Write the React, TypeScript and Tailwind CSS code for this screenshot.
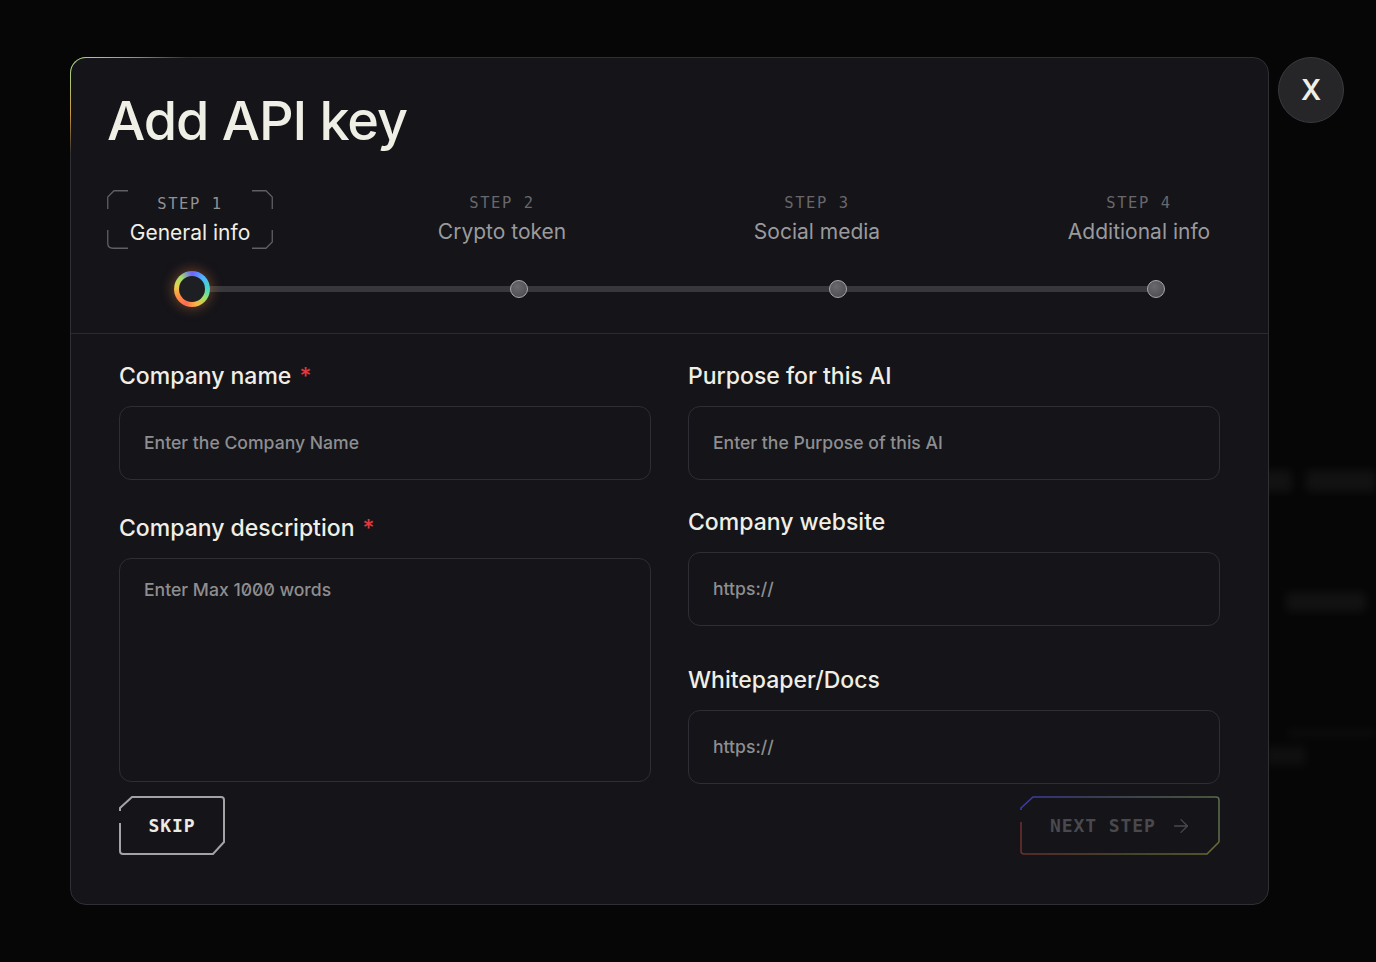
import { ArrowRight } from "lucide-react";

const STEPS = [
  { step: "STEP 1", title: "General info" },
  { step: "STEP 2", title: "Crypto token" },
  { step: "STEP 3", title: "Social media" },
  { step: "STEP 4", title: "Additional info" },
];

const sans = "font-['Inter','Noto_Sans',sans-serif]";
const mono = "font-['DejaVu_Sans_Mono','Liberation_Mono',monospace]";

function StepBrackets() {
  return (
    <svg
      className="pointer-events-none absolute inset-0"
      width="166"
      height="59"
      viewBox="0 0 166 59"
      fill="none"
      stroke="#5f5f64"
      strokeWidth="1.3"
    >
      <path d="M0.75 19 V7 L7 0.75 H21" />
      <path d="M0.75 40 V53 Q0.75 58.25 6 58.25 H21" />
      <path d="M145 0.75 H159 L165.25 7 V19" />
      <path d="M165.25 40 V52 L159 58.25 H145" />
    </svg>
  );
}

function StepLabel({ step, title, active }: { step: string; title: string; active?: boolean }) {
  return (
    <div className="flex flex-col items-center">
      <span
        className={`${mono} text-[15.5px] leading-[22px] tracking-[0.1em] ${
          active ? "text-[#919194]" : "text-[#68686c]"
        }`}
      >
        {step}
      </span>
      <span
        className={`${sans} mt-[5px] whitespace-nowrap text-[21px] leading-[26px] ${
          active ? "text-[#f0efe6]" : "text-[#9a9a9c]"
        }`}
      >
        {title}
      </span>
    </div>
  );
}

function Stepper() {
  return (
    <div>
      <div className="flex items-start">
        <div className="relative flex h-[59px] w-[166px] shrink-0 items-center justify-center">
          <StepBrackets />
          <StepLabel step={STEPS[0].step} title={STEPS[0].title} active />
        </div>
        <div className="ml-[149px] flex w-[160px] shrink-0 justify-center pt-[2px]">
          <StepLabel step={STEPS[1].step} title={STEPS[1].title} />
        </div>
        <div className="ml-[155px] flex w-[160px] shrink-0 justify-center pt-[2px]">
          <StepLabel step={STEPS[2].step} title={STEPS[2].title} />
        </div>
        <div className="ml-[162px] flex w-[160px] shrink-0 justify-center pt-[2px]">
          <StepLabel step={STEPS[3].step} title={STEPS[3].title} />
        </div>
      </div>

      <div className="relative ml-[67px] mt-[22px] flex h-[36px] w-[991px] items-center justify-between">
        <div className="absolute left-[18px] right-[9px] top-1/2 h-[6px] -translate-y-1/2 rounded-full bg-[#38383c]" />
        <div className="relative h-[36px] w-[36px] rounded-full bg-[conic-gradient(from_0deg,#6f62ff,#4fb4ff_12%,#45dcc4_25%,#a9df5e_36%,#ffb240_46%,#ff6b52_56%,#ff9342_68%,#e9cf4f_78%,#9fdf6c_88%,#6f62ff)] p-[5px] shadow-[0_0_14px_rgba(255,140,70,0.45)]">
          <div className="h-full w-full rounded-full bg-[#1e1f22]" />
        </div>
        <div className="relative h-[18px] w-[18px] rounded-full border border-[#a9a9ad] bg-[radial-gradient(circle_at_40%_35%,#6a6a6e,#48484c)]" />
        <div className="relative h-[18px] w-[18px] rounded-full border border-[#a9a9ad] bg-[radial-gradient(circle_at_40%_35%,#6a6a6e,#48484c)]" />
        <div className="relative h-[18px] w-[18px] rounded-full border border-[#a9a9ad] bg-[radial-gradient(circle_at_40%_35%,#6a6a6e,#48484c)]" />
      </div>
    </div>
  );
}

function Label({ text, required }: { text: string; required?: boolean }) {
  return (
    <div className={`${sans} text-[23px] font-medium leading-[32px] text-[#f0efe6]`}>
      {text}
      {required && <span className="ml-[8px] text-[#e0393e]">*</span>}
    </div>
  );
}

function Field({ placeholder, height = "h-[74px]" }: { placeholder: string; height?: string }) {
  return (
    <div
      className={`${height} mt-[14px] rounded-[12px] border border-[#2e2e34] bg-[#141419] px-[24px] ${
        height === "h-[74px]" ? "flex items-center" : "pt-[19px]"
      }`}
    >
      <span className={`${sans} slashed-zero text-[17.6px] font-medium leading-[24px] text-[#8e8e90]`}>
        {placeholder}
      </span>
    </div>
  );
}

function SkipButton() {
  return (
    <button className="relative flex h-[59px] w-[106px] items-center justify-center">
      <svg
        className="pointer-events-none absolute inset-0"
        width="106"
        height="59"
        viewBox="0 0 106 59"
        fill="none"
        stroke="#a3a3a6"
        strokeWidth="2"
      >
        <path d="M1 15 V12 L13 1 H102 Q105 1 105 4 V46 L94 58 H4 Q1 58 1 55 V27" />
      </svg>
      <span className={`${mono} text-[18px] font-bold tracking-[0.05em] text-[#ecebe3]`}>SKIP</span>
    </button>
  );
}

function NextButton() {
  return (
    <button className="relative flex h-[59px] w-[200px] items-center pl-[30px]">
      <svg
        className="pointer-events-none absolute inset-0"
        width="200"
        height="59"
        viewBox="0 0 200 59"
        fill="none"
        strokeWidth="1.6"
      >
        <defs>
          <linearGradient id="nsTop" x1="0" y1="0" x2="1" y2="0">
            <stop offset="0" stopColor="#3d3aa8" />
            <stop offset="0.35" stopColor="#3e4a66" />
            <stop offset="1" stopColor="#5a6a48" />
          </linearGradient>
          <linearGradient id="nsBottom" x1="0" y1="0" x2="1" y2="0">
            <stop offset="0" stopColor="#6a2e2e" />
            <stop offset="0.5" stopColor="#55502e" />
            <stop offset="1" stopColor="#6c6a34" />
          </linearGradient>
        </defs>
        <path d="M1 14 V12 L13 1 H196 Q199 1 199 4 V46" stroke="url(#nsTop)" />
        <path d="M1 26 V55 Q1 58 4 58 H187 L199 46" stroke="url(#nsBottom)" />
      </svg>
      <span className={`${mono} text-[18px] font-bold tracking-[0.05em] text-[#49494e]`}>NEXT STEP</span>
      <ArrowRight className="ml-[14px] text-[#49494e]" size={22} strokeWidth={1.4} />
    </button>
  );
}

function BackgroundPage() {
  return (
    <div className="flex h-[962px] flex-col items-end pt-[470px] blur-[5px]">
      <div className="flex h-[22px] gap-[14px]">
        <div className="w-[50px] bg-white/[0.05]" />
        <div className="w-[70px] bg-white/[0.05]" />
      </div>
      <div className="mr-[10px] mt-[100px] h-[20px] w-[80px] bg-white/[0.05]" />
      <div className="mt-[118px] h-[6px] w-[90px] bg-white/[0.04]" />
      <div className="mr-[70px] mt-[10px] h-[20px] w-[40px] bg-white/[0.04]" />
    </div>
  );
}

export default function App() {
  return (
    <div className="relative h-[962px] w-[1376px] overflow-hidden bg-[#060606]">
      <BackgroundPage />

      <div className="absolute inset-0 flex items-start pl-[70px] pt-[57px]">
        <div className="relative w-[1199px] rounded-[16px] border border-[#2f2f35] bg-[#141419]">
          {/* glowing top-left edge */}
          <div className="pointer-events-none absolute -left-px -top-px h-[18px] w-[18px] rounded-tl-[16px] border-l border-t border-[#a9cf7c]" />
          <div className="pointer-events-none absolute -top-px left-[16px] h-px w-[100px] bg-gradient-to-r from-[#a9cf7c] via-[#4aa7c9] to-transparent" />
          <div className="pointer-events-none absolute -left-px top-[16px] h-[80px] w-px bg-gradient-to-b from-[#a9cf7c] via-[#c8953c] to-transparent" />

          <div className="border-b border-[#2a2a30] px-[36px] pb-[26px] pt-[31px]">
            <h1 className={`${sans} text-[54px] font-medium leading-[64px] tracking-[-0.02em] text-[#f0efe6]`}>
              Add API key
            </h1>
            <div className="mt-[37px]">
              <Stepper />
            </div>
          </div>

          <div className="px-[48px] pb-[49px] pt-[26px]">
            <div className="grid grid-cols-2 gap-x-[37px]">
              <div>
                <Label text="Company name" required />
                <Field placeholder="Enter the Company Name" />
                <div className="mt-[32px]">
                  <Label text="Company description" required />
                  <Field placeholder="Enter Max 1000 words" height="h-[224px]" />
                </div>
              </div>
              <div>
                <Label text="Purpose for this AI" />
                <Field placeholder="Enter the Purpose of this AI" />
                <div className="mt-[26px]">
                  <Label text="Company website" />
                  <Field placeholder="https://" />
                </div>
                <div className="mt-[38px]">
                  <Label text="Whitepaper/Docs" />
                  <Field placeholder="https://" />
                </div>
              </div>
            </div>
            <div className="mt-[12px] flex items-center justify-between">
              <SkipButton />
              <NextButton />
            </div>
          </div>
        </div>

        <button className="ml-[9px] flex h-[66px] w-[66px] items-center justify-center rounded-full border border-[#3a3a3f] bg-[#262629]">
          <span className={`${sans} text-[28px] font-semibold leading-none text-[#f0efe6]`}>X</span>
        </button>
      </div>
    </div>
  );
}
